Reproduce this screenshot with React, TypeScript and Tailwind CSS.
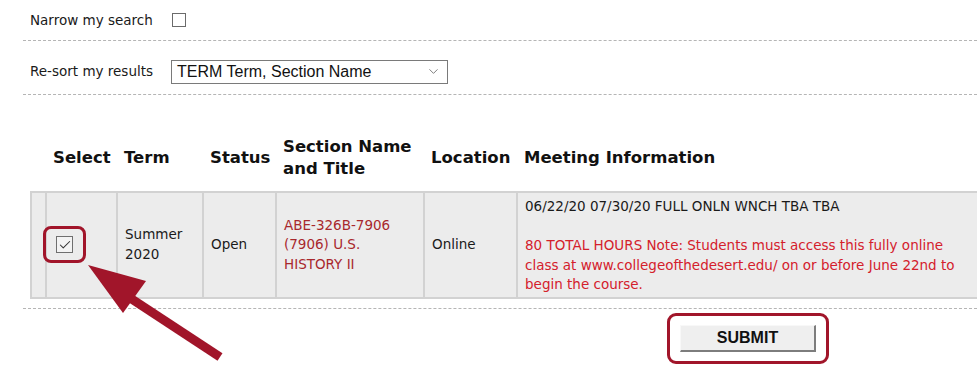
import { Check, ChevronDown } from "lucide-react";

const body = "font-['DejaVu_Sans',Verdana,sans-serif]";

export default function App() {
  return (
    <div className={`relative w-[977px] h-[368px] overflow-hidden bg-white text-[#1a1a1a] ${body}`}>
      <div className="pl-[23px]">
        {/* Narrow */}
        <div className="flex items-center h-[41px] pl-[7px] border-b border-dashed border-[#b5b5b5]">
          <span className="text-[13.5px]">Narrow my search</span>
          <span className="ml-[19px] w-[14px] h-[14px] border border-[#6b6b6b] bg-white" />
        </div>

        {/* Re-sort */}
        <div className="flex items-center h-[54px] pl-[7px] pt-[8px] border-b border-dashed border-[#b5b5b5]">
          <span className="text-[13.5px]">Re-sort my results</span>
          <div className="ml-[18px] flex items-center justify-between w-[277px] h-[24px] border border-[#7a7a7a] pl-[5px] pr-[6px] font-['Liberation_Sans',Arial,sans-serif] text-[16px] text-[#111]">
            <span>TERM Term, Section Name</span>
            <ChevronDown className="w-[15px] h-[15px] text-[#555]" strokeWidth={1.2} />
          </div>
        </div>

        {/* Table */}
        <div className="pl-[7px] pt-[40px]">
          <table className="w-[964px] border-collapse table-fixed">
            <colgroup>
              <col className="w-[15px]" />
              <col className="w-[71px]" />
              <col className="w-[86px]" />
              <col className="w-[73px]" />
              <col className="w-[148px]" />
              <col className="w-[93px]" />
              <col />
            </colgroup>
            <thead>
              <tr className="text-[16.5px] font-bold text-[#111] leading-[22px] text-left align-middle">
                <th className="h-[57px] pb-[10px]" />
                <th className="px-[7px] pb-[10px]">Select</th>
                <th className="px-[7px] pb-[10px]">Term</th>
                <th className="px-[7px] pb-[10px]">Status</th>
                <th className="px-[7px] pb-[10px]">Section Name and Title</th>
                <th className="px-[7px] pb-[10px]">Location</th>
                <th className="px-[7px] pb-[10px]">Meeting Information</th>
              </tr>
            </thead>
            <tbody>
              <tr className="bg-[#ececec] text-[13.5px] leading-[19.5px] align-middle">
                <td className="border-2 border-[#d2d2d2] h-[102px]" />
                <td className="border-2 border-[#d2d2d2] pl-[7px]">
                  <span className="inline-flex align-middle items-center justify-center px-[10px] py-[7px] border-[3px] border-[#a1152a] rounded-[8px] -ml-[11px]">
                    <span className="flex items-center justify-center w-[17px] h-[17px] border border-[#6f6f6f] bg-[#f3f3f3]">
                      <Check className="w-[14px] h-[14px] text-[#333]" strokeWidth={1.8} />
                    </span>
                  </span>
                </td>
                <td className="border-2 border-[#d2d2d2] px-[7px]">Summer<br />2020</td>
                <td className="border-2 border-[#d2d2d2] px-[7px]">Open</td>
                <td className="border-2 border-[#d2d2d2] px-[7px] text-[#a8282c]">ABE-326B-7906 (7906) U.S. HISTORY II</td>
                <td className="border-2 border-[#d2d2d2] px-[7px]">Online</td>
                <td className="border-2 border-[#d2d2d2] pl-[7px] pr-[25px] pt-[4px] pb-[2px] align-top">
                  <p>06/22/20 07/30/20 FULL ONLN WNCH TBA TBA</p>
                  <p className="mt-[19.5px] text-[#d4202b]">
                    80 TOTAL HOURS Note: Students must access this fully online class at www.collegeofthedesert.edu/ on or before June 22nd to begin the course.
                  </p>
                </td>
              </tr>
            </tbody>
          </table>
        </div>

        <div className="mt-[9px] border-b border-dashed border-[#b5b5b5]" />

        {/* Submit */}
        <div className="flex pl-[644px] pt-[4px]">
          <div className="border-[3px] border-[#a1152a] rounded-[9px] px-[10px] py-[9px]">
            <button className="w-[136px] h-[27px] bg-[#efefef] border-t border-l border-[#f8f8f8] border-r-2 border-b-2 border-r-[#7d7d7d] border-b-[#7d7d7d] font-['Liberation_Sans',Arial,sans-serif] font-bold text-[16px] text-[#111]">
              SUBMIT
            </button>
          </div>
        </div>
      </div>

      {/* annotation arrow */}
      <svg className="absolute left-0 top-0 pointer-events-none" width="977" height="368">
        <line x1="220" y1="357" x2="118" y2="290" stroke="#a1152a" strokeWidth="9" />
        <polygon points="88,265 146,281 123,313" fill="#a1152a" />
      </svg>
    </div>
  );
}
